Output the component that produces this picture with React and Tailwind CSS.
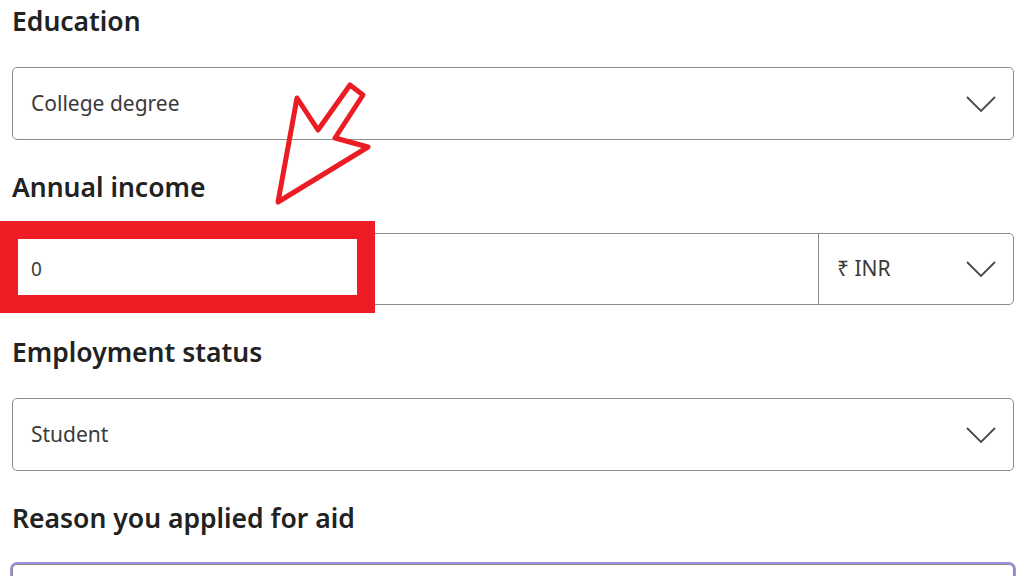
import React from "react";

function Chevron() {
    return (
        <svg width="30" height="16" viewBox="0 0 30 16" fill="none" className="shrink-0">
            <polyline points="1,1 15,15 29,1" stroke="#4a4a4a" strokeWidth="1.8" strokeLinejoin="miter" />
        </svg>
    );
}

function Field({ label, children }) {
    return (
        <div className="flex flex-col">
            <h2 className="h-[42px] leading-[42px] text-[26.5px] font-semibold text-[#222]">{label}</h2>
            <div className="mt-[25px]">{children}</div>
        </div>
    );
}

function Select({ value }) {
    return (
        <div className="h-[73px] flex items-center justify-between border border-[#8c8c8c] rounded-[5px] pl-[18px] pr-[17px] bg-white">
            <span className="text-[21px] text-[#3a3a3a]">{value}</span>
            <Chevron />
        </div>
    );
}

export default function App() {
    return (
        <div
            className="relative h-[576px] overflow-hidden bg-white pl-[12px] pr-[10px]"
            style={{ fontFamily: "'Noto Sans', Lato, sans-serif" }}
        >
            <div className="flex flex-col gap-[26px]">
                <Field label="Education">
                    <Select value="College degree" />
                </Field>

                <Field label="Annual income">
                    <div className="h-[72px] flex border border-[#8c8c8c] rounded-[5px] bg-white">
                        <div className="flex-1 flex items-center pl-[18px] text-[19px] text-[#3a3a3a]">0</div>
                        <div className="w-[195px] flex items-center justify-between border-l border-[#8c8c8c] pl-[18px] pr-[17px]">
                            <span className="text-[21px] text-[#3a3a3a]">₹ INR</span>
                            <Chevron />
                        </div>
                    </div>
                </Field>

                <Field label="Employment status">
                    <Select value="Student" />
                </Field>

                <Field label="Reason you applied for aid">
                    <div className="h-[73px] border border-[#8c8c8c] rounded-[5px] ring-2 ring-[#9b93dc] bg-white"></div>
                </Field>
            </div>

            {/* red highlight box */}
            <div className="absolute left-0 top-[221px] w-[375px] h-[92px] border-[18px] border-[#ee1c24]"></div>

            {/* red arrow */}
            <svg className="absolute left-0 top-0" width="1024" height="576" viewBox="0 0 1024 576" fill="none">
                <polygon
                    points="278,202 297,98 318,130 350,85 363,95 335,138 368,147"
                    stroke="#ec1c24"
                    strokeWidth="5"
                    strokeLinejoin="round"
                    fill="none"
                />
            </svg>
        </div>
    );
}
